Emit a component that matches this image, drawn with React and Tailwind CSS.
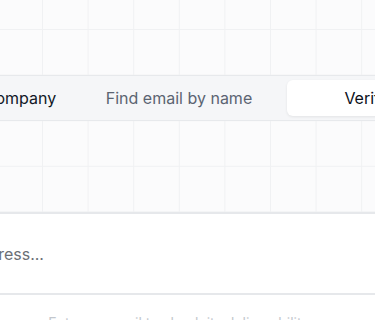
import React, { useState } from 'react';

const tabs = ['Find email by company', 'Find email by name', 'Verify email'];

export default function App() {
  const [active, setActive] = useState(2);
  const [email, setEmail] = useState('');

  return (
    <div
      className="relative h-[320px] w-[375px] overflow-hidden bg-[#fbfbfc] font-['Inter',sans-serif] [background-image:linear-gradient(to_right,#f0f1f3_1px,transparent_1px),linear-gradient(to_bottom,#f0f1f3_1px,transparent_1px)] [background-size:45.6px_45.6px] [background-position:42px_29px]"
    >
      <div className="ml-[-138px] w-[634px] pt-[75px]">
        {/* Tabs */}
        <div className="grid h-[46px] grid-cols-3 gap-1.5 rounded-lg border border-[#e7e9ec] bg-[#f5f6f8] p-[4px]">
          {tabs.map((t, i) => (
            <button
              key={t}
              onClick={() => setActive(i)}
              className={`flex items-center justify-center rounded-md text-[16px] whitespace-nowrap ${
                active === i
                  ? 'bg-white text-[#0b0f19] shadow-[0_1px_3px_rgba(0,0,0,0.08)]'
                  : i === 0
                  ? 'text-[#111827]'
                  : 'text-[#5b6472]'
              }`}
            >
              {t}
            </button>
          ))}
        </div>

        {/* Input */}
        <div className="mt-[91px] border-y-2 border-[#e6e8eb] bg-white">
          <input
            value={email}
            onChange={(e) => setEmail(e.target.value)}
            placeholder="Enter email address..."
            className="h-[79px] w-full bg-transparent pl-[19px] pr-5 text-[16px] text-[#111827] outline-none placeholder:text-[#6b6f76]"
          />
        </div>

        <div className="bg-white pt-[17px] pb-10">
          <p className="text-center text-[14px] text-[#c3c7cd]">
            Enter an email to check its deliverability
          </p>
        </div>
      </div>
    </div>
  );
}
